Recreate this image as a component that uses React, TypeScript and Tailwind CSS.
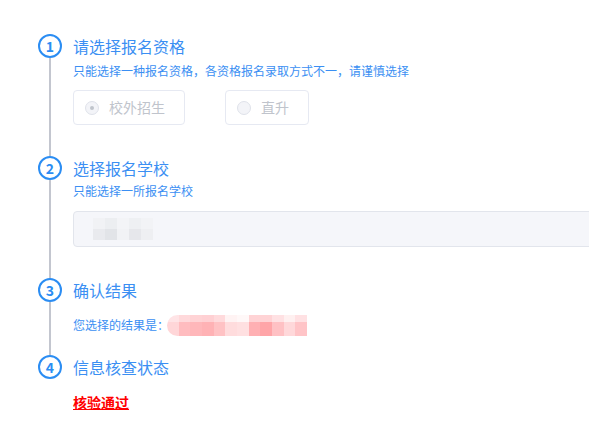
import React from "react";

// pixelated "blurred" values, kept as mosaic cells
const schoolTop = ["bg-[#f1f2f5]", "bg-[#eceef1]", "bg-[#f3f4f7]", "bg-[#eef0f3]", "bg-[#f2f3f6]"];
const schoolBottom = ["bg-[#e9eaee]", "bg-[#e2e4e8]", "bg-[#f1f2f5]", "bg-[#e6e7eb]", "bg-[#eeeff2]"];

const resultTop = [
  "bg-[#ffe4e6]",
  "bg-[#ffd9db]",
  "bg-[#ffd3d5]",
  "bg-[#ffd0d3]",
  "bg-[#ffdadc]",
  "bg-[#fff3f3]",
  "bg-[#fff8f8]",
  "bg-[#ffd3d5]",
  "bg-[#ffd3d5]",
  "bg-[#ffe1e3]",
  "bg-[#fff0f0]",
  "bg-[#ffe1e3]",
];
const resultBottom = [
  "bg-[#ffd6d8]",
  "bg-[#ffbcbf]",
  "bg-[#ffb7ba]",
  "bg-[#ffb2b5]",
  "bg-[#ffc2c4]",
  "bg-[#ffdcdd]",
  "bg-[#ffe0e1]",
  "bg-[#ffb0b3]",
  "bg-[#ffa5a8]",
  "bg-[#ffc1c4]",
  "bg-[#ffd8da]",
  "bg-[#ffc4c7]",
];

interface StepProps {
  num: number;
  title: string;
  last?: boolean;
  children: React.ReactNode;
}

const Step: React.FC<StepProps> = ({ num, title, last, children }) => {
  return (
    <div className="flex">
      <div className="flex w-6 flex-col items-center">
        <div className="flex h-6 w-6 shrink-0 items-center justify-center rounded-full border-2 border-[#2b8df3] text-[14px] font-bold leading-none text-[#2b8df3]">
          {num}
        </div>
        {!last && <div className="w-[2px] flex-1 bg-[#c3c6cf]" />}
      </div>
      <div className="ml-[11px] flex-1">
        <div className="h-6 text-[16px] leading-6 text-[#3b8ff3]">{title}</div>
        {children}
      </div>
    </div>
  );
};

const Radio: React.FC<{ label: string; checked?: boolean; width: string }> = ({
  label,
  checked,
  width,
}) => (
  <div
    className={`flex h-[35px] items-center rounded-[4px] border border-[#e6e9f2] pl-[11px] ${width}`}
  >
    <span className="flex h-[14px] w-[14px] items-center justify-center rounded-full border border-[#dfe2ea] bg-[#f3f4f8]">
      {checked && <span className="h-[4px] w-[4px] rounded-full bg-[#c0c4cc]" />}
    </span>
    <span className="ml-[10px] text-[14px] text-[#c0c4cc]">{label}</span>
  </div>
);

export default function App() {
  return (
    <div
      className="h-[440px] w-[589px] overflow-hidden bg-white pl-[38px] pt-[34px]"
      style={{ fontFamily: '"Microsoft YaHei", "Noto Sans CJK SC", sans-serif' }}
    >
      <Step num={1} title="请选择报名资格">
        <div className="mt-[3px] h-5 text-[12px] leading-5 text-[#3b8ff3]">
          只能选择一种报名资格，各资格报名录取方式不一，请谨慎选择
        </div>
        <div className="mt-[9px] flex gap-[40px] pb-[31px]">
          <Radio label="校外招生" checked width="w-[112px]" />
          <Radio label="直升" width="w-[84px]" />
        </div>
      </Step>

      <Step num={2} title="选择报名学校">
        <div className="mt-[1px] h-5 text-[12px] leading-5 text-[#3b8ff3]">
          只能选择一所报名学校
        </div>
        <div className="mb-[31px] mt-[10px] flex h-[36px] w-[600px] items-center rounded-[4px] border border-[#e2e5ec] bg-[#f5f6fa] pl-[9px]">
          <div className="flex flex-col overflow-hidden rounded-l-full pl-[10px]">
            <div className="flex h-[11px]">
              {schoolTop.map((c, i) => (
                <div key={i} className={`h-full w-[12px] ${c}`} />
              ))}
            </div>
            <div className="flex h-[11px]">
              {schoolBottom.map((c, i) => (
                <div key={i} className={`h-full w-[12px] ${c}`} />
              ))}
            </div>
          </div>
        </div>
      </Step>

      <Step num={3} title="确认结果">
        <div className="mt-[12px] flex h-[22px] items-center">
          <span className="text-[12px] text-[#3b8ff3]">您选择的结果是：</span>
          <div className="-ml-[2px] flex w-[140px] flex-col overflow-hidden rounded-l-full">
            <div className="flex h-[7px]">
              {resultTop.map((c, i) => (
                <div key={i} className={`h-full flex-1 ${c}`} />
              ))}
            </div>
            <div className="flex h-[14px]">
              {resultBottom.map((c, i) => (
                <div key={i} className={`h-full flex-1 ${c}`} />
              ))}
            </div>
          </div>
        </div>
        <div className="h-[19px]" />
      </Step>

      <Step num={4} title="信息核查状态" last>
        <div className="mt-[13px] text-[14px] font-bold leading-5 text-[#ff0000] underline">
          核验通过
        </div>
      </Step>
    </div>
  );
}
